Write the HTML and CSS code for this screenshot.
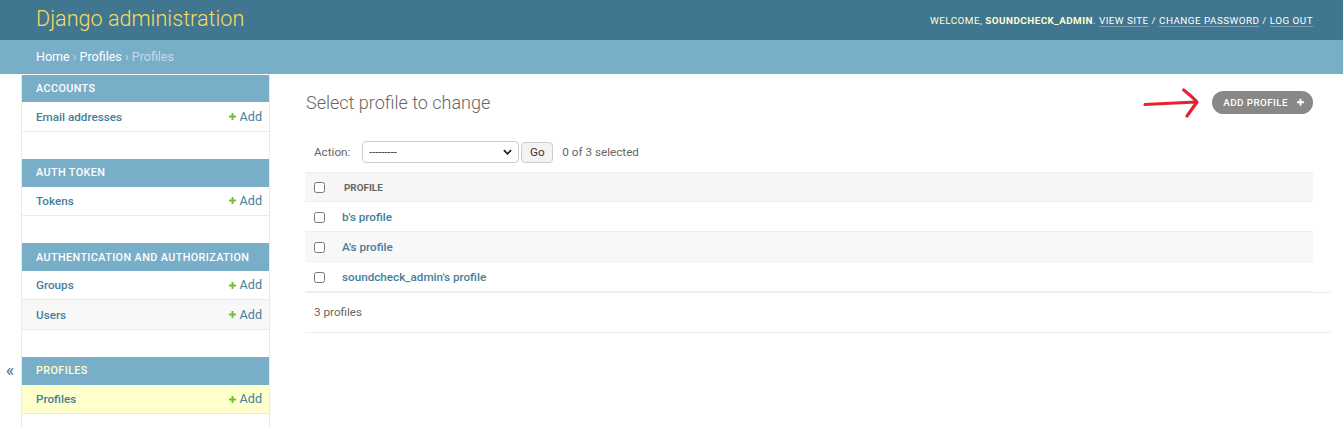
FILE: index.html
```html
<!DOCTYPE html>
<html lang="en">
<head>
<meta charset="utf-8">
<title>Select profile to change | Django site admin</title>
<link rel="stylesheet" href="styles.css">
</head>
<body>
<header class="header">
  <h1 class="site-name">Django administration</h1>
  <div class="user-tools">Welcome, <strong>soundcheck_admin</strong>. <a href="#">View site</a> / <a href="#">Change password</a> / <a href="#">Log out</a></div>
</header>
<div class="breadcrumbs"><a href="#">Home</a> › <a href="#">Profiles</a> › Profiles</div>
<div class="main">
  <div class="toggle"><span class="toggle-glyph">«</span></div>
  <nav class="sidebar">
    <div class="module">
      <div class="caption">Accounts</div>
      <div class="model-row"><a class="model" href="#">Email addresses</a><a class="addlink" href="#"><svg class="plus" viewBox="0 0 1792 1792"><path d="M1600 796v192q0 40-28 68t-68 28h-416v416q0 40-28 68t-68 28h-192q-40 0-68-28t-28-68v-416h-416q-40 0-68-28t-28-68v-192q0-40 28-68t68-28h416v-416q0-40 28-68t68-28h192q40 0 68 28t28 68v416h416q40 0 68 28t28 68z"/></svg>Add</a></div>
    </div>
    <div class="module">
      <div class="caption">Auth Token</div>
      <div class="model-row"><a class="model" href="#">Tokens</a><a class="addlink" href="#"><svg class="plus" viewBox="0 0 1792 1792"><path d="M1600 796v192q0 40-28 68t-68 28h-416v416q0 40-28 68t-68 28h-192q-40 0-68-28t-28-68v-416h-416q-40 0-68-28t-28-68v-192q0-40 28-68t68-28h416v-416q0-40 28-68t68-28h192q40 0 68 28t28 68v416h416q40 0 68 28t28 68z"/></svg>Add</a></div>
    </div>
    <div class="module">
      <div class="caption">Authentication and Authorization</div>
      <div class="model-row"><a class="model" href="#">Groups</a><a class="addlink" href="#"><svg class="plus" viewBox="0 0 1792 1792"><path d="M1600 796v192q0 40-28 68t-68 28h-416v416q0 40-28 68t-68 28h-192q-40 0-68-28t-28-68v-416h-416q-40 0-68-28t-28-68v-192q0-40 28-68t68-28h416v-416q0-40 28-68t68-28h192q40 0 68 28t28 68v416h416q40 0 68 28t28 68z"/></svg>Add</a></div>
      <div class="model-row alt"><a class="model" href="#">Users</a><a class="addlink" href="#"><svg class="plus" viewBox="0 0 1792 1792"><path d="M1600 796v192q0 40-28 68t-68 28h-416v416q0 40-28 68t-68 28h-192q-40 0-68-28t-28-68v-416h-416q-40 0-68-28t-28-68v-192q0-40 28-68t68-28h416v-416q0-40 28-68t68-28h192q40 0 68 28t28 68v416h416q40 0 68 28t28 68z"/></svg>Add</a></div>
    </div>
    <div class="module current-app">
      <div class="caption">Profiles</div>
      <div class="model-row current"><a class="model" href="#">Profiles</a><a class="addlink" href="#"><svg class="plus" viewBox="0 0 1792 1792"><path d="M1600 796v192q0 40-28 68t-68 28h-416v416q0 40-28 68t-68 28h-192q-40 0-68-28t-28-68v-416h-416q-40 0-68-28t-28-68v-192q0-40 28-68t68-28h416v-416q0-40 28-68t68-28h192q40 0 68 28t28 68v416h416q40 0 68 28t28 68z"/></svg>Add</a></div>
    </div>
  </nav>
  <div class="content">
    <div class="title-row">
      <h1 class="page-title">Select profile to change</h1>
      <svg class="annotation-arrow" viewBox="0 0 58 32" width="58" height="32"><path d="M2 17.5 Q28 16.2 53 15 M40.7 3 Q48 8.5 54 15 Q49 22 44 29"/></svg>
      <a class="add-btn" href="#">Add profile<svg class="btn-plus" viewBox="0 0 1792 1792"><path d="M1600 736v192q0 40-28 68t-68 28h-416v416q0 40-28 68t-68 28h-192q-40 0-68-28t-28-68v-416h-416q-40 0-68-28t-28-68v-192q0-40 28-68t68-28h416v-416q0-40 28-68t68-28h192q40 0 68 28t28 68v416h416q40 0 68 28t28 68z"/></svg></a>
    </div>
    <div class="actions">
      <label class="action-label">Action:</label>
      <span class="select-wrap">
        <select class="action-select"><option>---------</option></select>
        <svg class="chevron" viewBox="0 0 10 6"><path d="M1 1l4 4 4-4"/></svg>
      </span>
      <button class="go-btn" type="button">Go</button>
      <span class="counter">0 of 3 selected</span>
    </div>
    <table class="results">
      <thead>
        <tr><th class="check"><input type="checkbox"></th><th class="name">Profile</th></tr>
      </thead>
      <tbody>
        <tr><td class="check"><input type="checkbox"></td><th class="name"><a href="#">b's profile</a></th></tr>
        <tr class="alt"><td class="check"><input type="checkbox"></td><th class="name"><a href="#">A's profile</a></th></tr>
        <tr><td class="check"><input type="checkbox"></td><th class="name"><a href="#">soundcheck_admin's profile</a></th></tr>
      </tbody>
    </table>
    <p class="paginator">3 profiles</p>
  </div>
</div>
</body>
</html>
```
FILE: styles.css
```css
* { box-sizing: border-box; }
body {
  margin: 0;
  font-family: Roboto, "Liberation Sans", sans-serif;
  font-size: 11.7px;
  color: #333;
  background: #fff;
}
a { text-decoration: none; color: #447e9b; }

/* header */
.header {
  height: 40px;
  background: #417690;
  display: flex;
  align-items: center;
  justify-content: space-between;
  padding: 0 30px 0 36px;
}
.site-name {
  margin: 0 0 2px;
  font-size: 21.6px;
  line-height: 22px;
  font-weight: 300;
  color: #f5dd5d;
}
.user-tools {
  font-size: 9.9px;
  letter-spacing: 0.45px;
  text-transform: uppercase;
  color: #ffc;
}
.user-tools strong { font-weight: 700; }
.user-tools a {
  color: #fff;
  border-bottom: 1px solid rgba(255,255,255,0.3);
}

/* breadcrumbs */
.breadcrumbs {
  height: 34px;
  line-height: 34px;
  padding: 0 36px;
  background: #79aec8;
  color: #c4dce8;
  font-size: 12.5px;
}
.breadcrumbs a { color: #fff; }

/* main layout */
.main {
  display: flex;
  min-height: 600px;
}
.toggle {
  flex: 0 0 22px;
  border-right: 1px solid #eaeaea;
  display: flex;
  justify-content: center;
  padding-top: 286px;
  padding-right: 1px;
}
.toggle-glyph {
  font-size: 18px;
  line-height: 20px;
  color: #447e9b;
  height: 20px;
}
.sidebar {
  flex: 0 0 248px;
  border-right: 1px solid #eaeaea;
  padding-top: 1px;
}
.module { margin-bottom: 27px; }
.caption {
  background: #79aec8;
  color: #fff;
  font-size: 10.8px;
  line-height: 13px;
  padding: 7.2px 14px;
  text-transform: uppercase;
  letter-spacing: 0.4px;
  font-weight: 500;
  white-space: nowrap;
}
.current-app .caption { color: #ffc; }
.model-row {
  display: flex;
  justify-content: space-between;
  align-items: center;
  padding: 7.2px 7px 7.2px 14px;
  line-height: 14.4px;
  border-bottom: 1px solid #eaeaea;
}
.model-row.alt { background: #f8f8f8; }
.model-row.current { background: #ffc; }
.model { font-weight: 500; font-size: 11.7px; }
.addlink {
  display: flex;
  align-items: center;
  font-size: 12.6px;
}
.plus {
  width: 9px;
  height: 9px;
  fill: #70bf2b;
  margin-right: 3px;
}

/* content */
.content {
  flex: 1;
  padding: 16px 12px 0 35px;
}
.title-row {
  position: relative;
  display: flex;
  justify-content: space-between;
  align-items: center;
  height: 24px;
  margin-right: 18px;
}
.page-title {
  margin: 1px 0 0 1px;
  font-size: 18px;
  line-height: 24px;
  font-weight: 300;
  color: #666;
}
.annotation-arrow {
  position: absolute;
  right: 112px;
  top: -3px;
  fill: none;
  stroke: #e6202c;
  stroke-width: 3.2;
  stroke-linecap: round;
  stroke-linejoin: round;
}
.add-btn {
  display: flex;
  align-items: center;
  height: 23px;
  padding: 0 8px 0 11px;
  border-radius: 12px;
  background: #888;
  color: #fff;
  font-size: 9.9px;
  font-weight: 500;
  letter-spacing: 0.4px;
  text-transform: uppercase;
}
.btn-plus {
  width: 9px;
  height: 9px;
  fill: #fff;
  margin-left: 8px;
}

.actions {
  display: flex;
  align-items: center;
  margin: 18px 18px 0 0;
  padding: 9px;
  height: 40px;
  color: #666;
}
.action-label { margin-right: 12px; }
.select-wrap {
  position: relative;
  display: inline-block;
  width: 157px;
  height: 22px;
}
.action-select {
  appearance: none;
  -webkit-appearance: none;
  width: 100%;
  height: 22px;
  border: 1px solid #ccc;
  border-radius: 4px;
  background: #fff;
  font-family: inherit;
  font-size: 11px;
  color: #333;
  padding: 0 6px;
}
.chevron {
  position: absolute;
  right: 7px;
  top: 8px;
  width: 9px;
  height: 6px;
  fill: none;
  stroke: #222;
  stroke-width: 2;
}
.go-btn {
  margin-left: 2px;
  height: 21px;
  width: 32px;
  border: 1px solid #ccc;
  border-radius: 4px;
  background: #f3f3f3;
  font-family: inherit;
  font-size: 11.7px;
  color: #333;
  padding: 0;
}
.counter { margin-left: 9px; }

.results {
  width: calc(100% - 18px);
  border-collapse: collapse;
}
.results thead th {
  background: #f6f6f6;
  border-top: 1px solid #eee;
  border-bottom: 1px solid #eee;
  height: 29px;
  font-size: 9.9px;
  font-weight: 700;
  color: #666;
  text-transform: uppercase;
  text-align: left;
  padding: 0;
}
.results td, .results tbody th {
  height: 30px;
  border-bottom: 1px solid #eee;
  text-align: left;
  padding: 0;
}
.results tr.alt td, .results tr.alt th { background: #f8f8f8; }
.results .check {
  width: 37px;
  padding-left: 9px;
}
.results thead th.check { padding-left: 9px; }
.results thead th.name { padding-left: 2px; }
.results tbody th a { font-weight: 500; font-size: 11.7px; }
.results input[type="checkbox"] {
  width: 11px;
  height: 11px;
  margin: 0;
  vertical-align: middle;
}
.paginator {
  margin: 0;
  border-top: 1px solid #eee;
  border-bottom: 1px solid #eee;
  height: 41px;
  line-height: 38px;
  padding-left: 9px;
  color: #666;
}
```
